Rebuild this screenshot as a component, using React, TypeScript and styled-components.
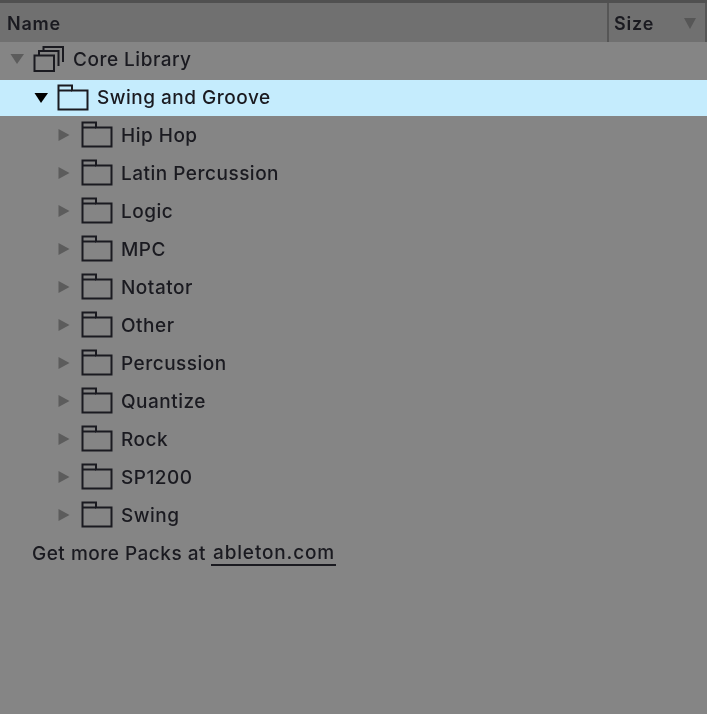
import styled, { createGlobalStyle } from "styled-components";

const GlobalStyle = createGlobalStyle`
  html, body {
    margin: 0;
    padding: 0;
    background: #ffffff;
  }
  body {
    font-family: "Inter", "Noto Sans", sans-serif;
  }
`;

const Panel = styled.div`
  width: 707px;
  height: 714px;
  background: #858585;
  color: #1a1a20;
  font-size: 19px;
  font-weight: 500;
  letter-spacing: 0.5px;
  overflow: hidden;
  filter: blur(0.5px);
`;

const Header = styled.header`
  height: 42px;
  box-sizing: border-box;
  display: flex;
  background: #707070;
  border-top: 3px solid #505050;
  font-size: 18px;
  font-weight: 600;
  letter-spacing: 0.8px;
`;

const NameCell = styled.div`
  flex: 1;
  display: flex;
  align-items: center;
  padding: 1px 0 0 7px;
`;

const SizeCell = styled.div`
  width: 100px;
  box-sizing: border-box;
  display: flex;
  align-items: center;
  justify-content: space-between;
  padding: 1px 8px 0 5px;
  border-left: 2px solid #565656;
  border-right: 2px solid #565656;
`;

const Row = styled.div<{ $depth: number; $selected?: boolean; $lifted?: boolean }>`
  height: ${(p) => (p.$selected ? "36px" : "38px")};
  box-sizing: border-box;
  display: flex;
  align-items: center;
  padding-left: ${(p) => 10 + p.$depth * 24}px;
  padding-bottom: ${(p) => (p.$lifted ? "4px" : "0")};
  background: ${(p) => (p.$selected ? "#c5ecfd" : "transparent")};
`;

const Label = styled.span<{ $raised?: boolean }>`
  padding-bottom: ${(p) => (p.$raised ? "2px" : "0")};
`;

const Arrow = styled.svg`
  width: 14px;
  height: 14px;
  flex: none;
  margin-right: 9px;
`;

const Glyph = styled.svg`
  width: 32px;
  height: 28px;
  flex: none;
  margin-right: 8px;
`;

const Footer = styled.div`
  height: 38px;
  display: flex;
  align-items: center;
  padding-left: 32px;
  gap: 5px;
`;

const PackLink = styled.a`
  color: inherit;
  text-decoration: none;
  border-bottom: 2px solid #1a1a20;
  line-height: 22px;
  margin-top: 1px;
  padding: 0 1px 0 2px;
  letter-spacing: 0.85px;
`;

const SortArrow = styled.svg`
  width: 14px;
  height: 14px;
`;

const Right = ({ color }: { color: string }) => (
  <Arrow viewBox="0 0 14 14">
    <path d="M0.5 1 L11.5 7 L0.5 13 Z" fill={color} />
  </Arrow>
);

const Down = ({ color }: { color: string }) => (
  <Arrow viewBox="0 0 14 14">
    <path d="M0.5 2 H14 L7 12 Z" fill={color} />
  </Arrow>
);

const Folder = () => (
  <Glyph viewBox="0 0 32 28" fill="none" stroke="#1a1a20" strokeWidth="2">
    <path d="M1.5 25.5 V1.5 H15 V6.5 H30.5 V25.5 Z" />
    <path d="M1.5 6.5 H15" />
  </Glyph>
);

const Library = () => (
  <Glyph viewBox="0 0 32 28" fill="none" stroke="#1a1a20" strokeWidth="2">
    <path d="M1.5 10.5 H21 V26 H1.5 Z" />
    <path d="M6 10 V6 H25.5 V21" />
    <path d="M10.5 5.5 V2 H30 V17" />
  </Glyph>
);

const folders = [
  "Hip Hop",
  "Latin Percussion",
  "Logic",
  "MPC",
  "Notator",
  "Other",
  "Percussion",
  "Quantize",
  "Rock",
  "SP1200",
  "Swing",
];

export default function App() {
  return (
    <>
      <GlobalStyle />
      <Panel>
        <Header>
          <NameCell>Name</NameCell>
          <SizeCell>
            Size
            <SortArrow viewBox="0 0 14 14">
              <path d="M1 2 H13 L7 13 Z" fill="#565656" />
            </SortArrow>
          </SizeCell>
        </Header>
        <Row $depth={0} $lifted>
          <Down color="#5c5c5c" />
          <Library />
          <Label>Core Library</Label>
        </Row>
        <Row $depth={1} $selected>
          <Down color="#000000" />
          <Folder />
          <Label $raised>Swing and Groove</Label>
        </Row>
        {folders.map((name) => (
          <Row $depth={2} key={name}>
            <Right color="#5c5c5c" />
            <Folder />
            <Label>{name}</Label>
          </Row>
        ))}
        <Footer>
          Get more Packs at <PackLink href="#">ableton.com</PackLink>
        </Footer>
      </Panel>
    </>
  );
}
